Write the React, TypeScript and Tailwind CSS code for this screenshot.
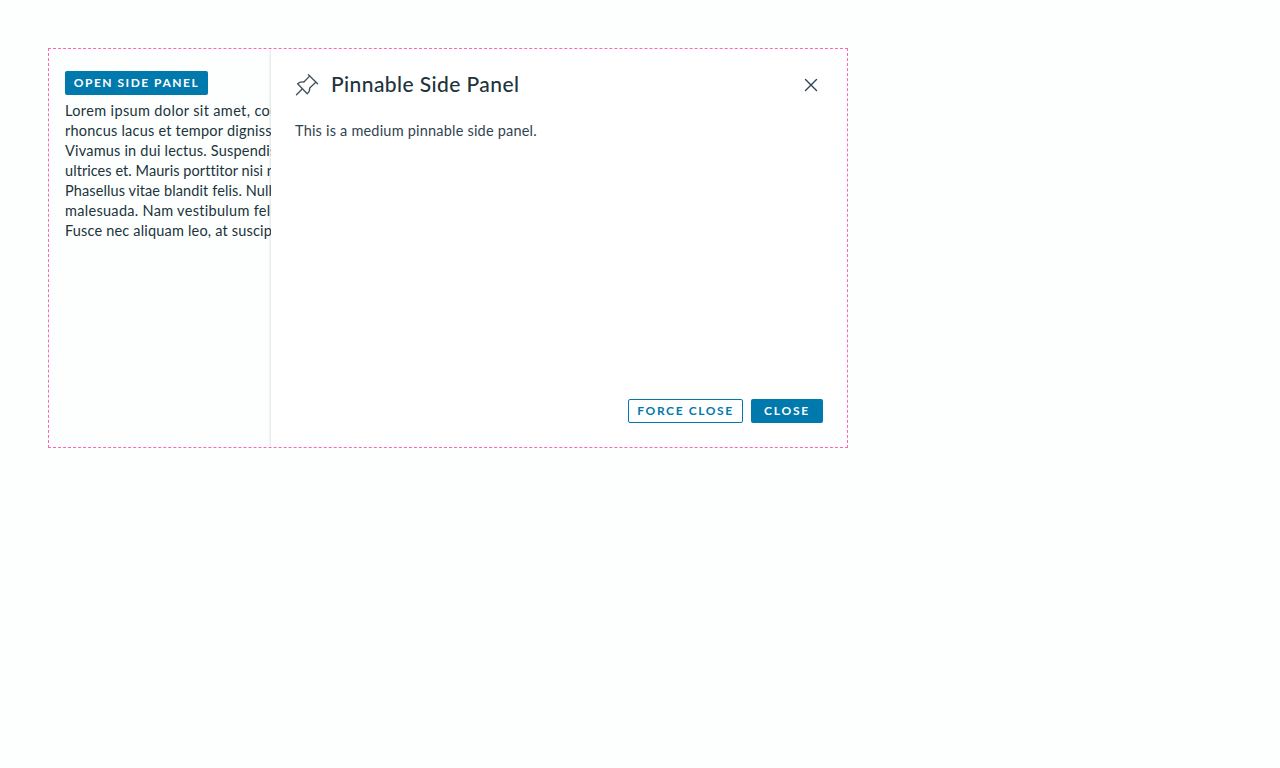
const lines = [
  { text: 'Lorem ipsum dolor sit amet, consectetur', tracking: 'tracking-[0.36px]' },
  { text: 'rhoncus lacus et tempor dignissim', tracking: 'tracking-[0.22px]' },
  { text: 'Vivamus in dui lectus. Suspendisse', tracking: 'tracking-[0.2px]' },
  { text: 'ultrices et. Mauris porttitor nisi nec', tracking: 'tracking-[0.06px]' },
  { text: 'Phasellus vitae blandit felis. Nullam', tracking: 'tracking-[0.11px]' },
  { text: 'malesuada. Nam vestibulum felis', tracking: 'tracking-[0.3px]' },
  { text: 'Fusce nec aliquam leo, at suscipit', tracking: 'tracking-[0.18px]' },
];

function PinIcon() {
  return (
    <svg className="h-6 w-6 shrink-0" viewBox="0 0 24 24" fill="none" stroke="#42535e" strokeWidth="1.35" strokeLinecap="round" strokeLinejoin="round">
      <path d="M13.4 1.7 22.6 10.8" />
      <path d="M14.6 3.1 8.9 9C6.6 8.6 4.4 9.1 2.6 10.8L12.2 20.7C14.2 19.1 15 17 14.7 14.9L20.8 9.3" />
      <path d="M6.9 16.2 1.5 21.8" />
    </svg>
  );
}

export default function App() {
  return (
    <div className="min-h-screen bg-[#fcfffe] p-12 font-['Lato',sans-serif] text-[14.5px] leading-5 text-[#21333b]">
      <div className="flex h-[400px] w-[800px] border border-dashed border-[#ff69b4]">
        <main className="w-[222px] shrink-0 overflow-hidden pl-4 pt-[22px]">
          <button className="block h-6 w-[143px] rounded-[2px] bg-[#0079ad] pb-px text-center text-xs font-bold leading-[23px] tracking-[1.5px] text-white">
            OPEN SIDE PANEL
          </button>
          <div className="mt-1.5 whitespace-nowrap">
            {lines.map((l) => (
              <div key={l.text} className={l.tracking}>{l.text}</div>
            ))}
          </div>
        </main>
        <aside className="flex min-w-0 flex-1 flex-col bg-white px-6 pb-6 pt-6 shadow-[-1px_0_2px_rgba(33,51,59,0.12)] [clip-path:inset(0_0_0_-4px)]">
          <header className="flex h-6 items-center">
            <PinIcon />
            <h1 className="mb-0.5 ml-3 flex-1 text-[21px] font-medium leading-6 tracking-[0.42px]">Pinnable Side Panel</h1>
            <button className="flex h-6 w-6 items-center justify-center" aria-label="Close panel">
              <svg className="h-6 w-6" viewBox="0 0 24 24" fill="none" stroke="#314351" strokeWidth="1.4" strokeLinecap="round">
                <path d="M6.5 6.5 17.5 17.5M17.5 6.5 6.5 17.5" />
              </svg>
            </button>
          </header>
          <p className="mt-6 flex-1 tracking-[0.2px] text-[#314351]">This is a medium pinnable side panel.</p>
          <footer className="flex justify-end gap-2">
            <button className="h-6 w-[115px] rounded-[2px] border border-[#0079ad] pb-px text-xs font-bold leading-[21px] tracking-[1.6px] text-[#0079ad]">FORCE CLOSE</button>
            <button className="h-6 w-[72px] rounded-[2px] bg-[#0079ad] pb-px text-xs font-bold leading-[23px] tracking-[1.75px] text-white">CLOSE</button>
          </footer>
        </aside>
      </div>
    </div>
  );
}
